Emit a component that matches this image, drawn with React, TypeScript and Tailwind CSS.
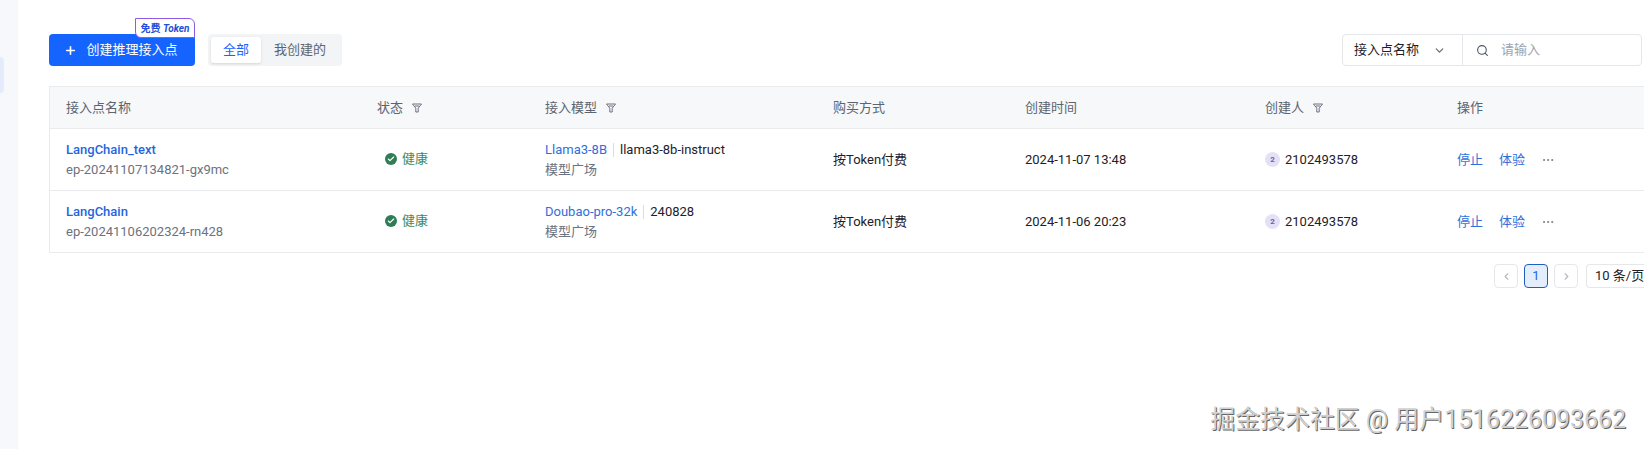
import React from 'react';
import { Plus, ChevronDown, ChevronLeft, ChevronRight, Search, Check, MoreHorizontal } from 'lucide-react';

const FONT = "font-['Roboto','Noto_Sans_CJK_SC',sans-serif]";

const COLS = 'grid grid-cols-[311px_168px_288px_192px_240px_192px_1fr]';

const FilterIcon = () => (
  <svg width="12" height="12" viewBox="0 0 12 12" fill="none" stroke="#6b7280" strokeWidth="1" className="ml-[8px]">
    <path d="M1.5 2h9L7.2 6.2V10H4.8V6.2z" strokeLinejoin="round" />
    <path d="M4 4h4" />
  </svg>
);

const rows = [
  { name: 'LangChain_text', id: 'ep-20241107134821-gx9mc', model: 'Llama3-8B', version: 'llama3-8b-instruct', time: '2024-11-07 13:48' },
  { name: 'LangChain', id: 'ep-20241106202324-rn428', model: 'Doubao-pro-32k', version: '240828', time: '2024-11-06 20:23' },
];

const HeaderCell = ({ label, filter }: { label: string; filter?: boolean }) => (
  <div className="flex items-center pl-[16px] text-[13px] text-[#5c6470]">
    {label}
    {filter && <FilterIcon />}
  </div>
);

export default function App() {
  return (
    <div className={`${FONT} relative flex h-[449px] w-[1644px] overflow-hidden bg-white text-[13px]`}>
      {/* Sidebar sliver */}
      <aside className="w-[18px] shrink-0 bg-[#f6f8fc] pt-[57px]">
        <div className="h-[36px] w-[4px] rounded-r bg-[#e4ebfc]" />
      </aside>

      <main className="min-w-0 flex-1 pl-[31px] pt-[34px]">
        {/* Toolbar */}
        <div className="flex h-[32px] items-center">
          <div className="relative">
            <button className="flex h-[32px] w-[146px] items-center justify-center gap-[9px] rounded bg-[#1664ff] pr-[2px] text-[13px] text-white">
              <Plus size={13} strokeWidth={3} />
              创建推理接入点
            </button>
            <div className="absolute -top-[16px] right-0 flex h-[20px] w-[60px] items-center justify-center rounded-tr-[6px] rounded-bl-[6px] border border-[#8f5ae8] bg-white text-[10px] font-bold text-[#1f4fd8]">
              免费&nbsp;<span className="italic">Token</span>
            </div>
          </div>
          <div className="ml-[13px] flex h-[32px] items-center rounded bg-[#f3f4f6] p-[3px]">
            <div className="flex h-[26px] w-[50px] items-center justify-center rounded-[3px] bg-white text-[#1664ff] shadow-sm">全部</div>
            <div className="flex h-[26px] w-[78px] items-center justify-center text-[#5c6470]">我创建的</div>
          </div>
          <div className="ml-auto mr-[2px] flex h-[32px] w-[300px] rounded border border-[#e5e7eb]">
            <div className="flex w-[120px] items-center border-r border-[#e5e7eb] pl-[11px] text-[#1d2129]">
              接入点名称
              <ChevronDown size={13} strokeWidth={2.5} className="ml-[14px] text-[#6b7280]" />
            </div>
            <div className="flex flex-1 items-center pl-[13px] text-[#9ca3af]">
              <Search size={13} className="mr-[12px] text-[#4b5563]" />
              请输入
            </div>
          </div>
        </div>

        {/* Table */}
        <div className="mt-[20px] border-l border-[#e9ebef]">
          <div className={`${COLS} h-[43px] border-y border-[#e9ebef] bg-[#f6f8fa]`}>
            <HeaderCell label="接入点名称" />
            <HeaderCell label="状态" filter />
            <HeaderCell label="接入模型" filter />
            <HeaderCell label="购买方式" />
            <HeaderCell label="创建时间" />
            <HeaderCell label="创建人" filter />
            <HeaderCell label="操作" />
          </div>
          {rows.map((r) => (
            <div key={r.id} className={`${COLS} h-[62px] items-center border-b border-[#e9ebef] text-[#1d2129]`}>
              <div className="pl-[16px] leading-[20px]">
                <div className="font-medium text-[#1f66e0]">{r.name}</div>
                <div className="text-[#6b7280]">{r.id}</div>
              </div>
              <div className="-mt-[2px] flex items-center gap-[5px] pl-[24px] text-[#3d8a63]">
                <span className="flex size-[12px] items-center justify-center rounded-full bg-[#2e7d57]">
                  <Check size={8} strokeWidth={3.5} className="text-white" />
                </span>
                健康
              </div>
              <div className="pl-[16px] leading-[20px]">
                <div className="flex items-center">
                  <span className="text-[#2f6fdb]">{r.model}</span>
                  <span className="mx-[6px] h-[14px] w-px bg-[#d9dce1]" />
                  <span>{r.version}</span>
                </div>
                <div className="text-[#6b7280]">模型广场</div>
              </div>
              <div className="pl-[16px]">按Token付费</div>
              <div className="pl-[16px]">{r.time}</div>
              <div className="flex items-center gap-[5px] pl-[16px]">
                <span className="flex size-[15px] items-center justify-center rounded-full bg-[#e6e0f7] text-[8px] font-bold text-[#6f5fa8]">2</span>
                2102493578
              </div>
              <div className="flex items-center pl-[16px] text-[#2f6fdb]">
                <span>停止</span>
                <span className="ml-[16px]">体验</span>
                <MoreHorizontal size={14} strokeWidth={1.5} className="ml-[16px] text-[#6b7280]" />
              </div>
            </div>
          ))}
        </div>

        {/* Pagination */}
        <div className="mt-[11px] flex h-[24px] justify-end gap-[6px]">
          <div className="flex w-[24px] items-center justify-center rounded border border-[#e5e7eb] text-[#b4b9c2]">
            <ChevronLeft size={11} strokeWidth={2.5} />
          </div>
          <div className="flex w-[24px] items-center justify-center rounded border border-[#1f5fbf] bg-[#e4edfc] text-[#1f66e0]">1</div>
          <div className="flex w-[24px] items-center justify-center rounded border border-[#e5e7eb] text-[#b4b9c2]">
            <ChevronRight size={11} strokeWidth={2.5} />
          </div>
          <div className="ml-[2px] flex w-[58px] items-center whitespace-nowrap rounded-l border border-r-0 border-[#e5e7eb] pl-[8px] text-[#1d2129]">10 条/页</div>
        </div>
      </main>

      {/* Watermark */}
      <div className="absolute right-[18px] top-[404px] text-[24.9px] leading-[32px] whitespace-nowrap text-[#d0d0d0] [text-shadow:1px_1px_0_#666]">
        掘金技术社区 @ 用户1516226093662
      </div>
    </div>
  );
}
